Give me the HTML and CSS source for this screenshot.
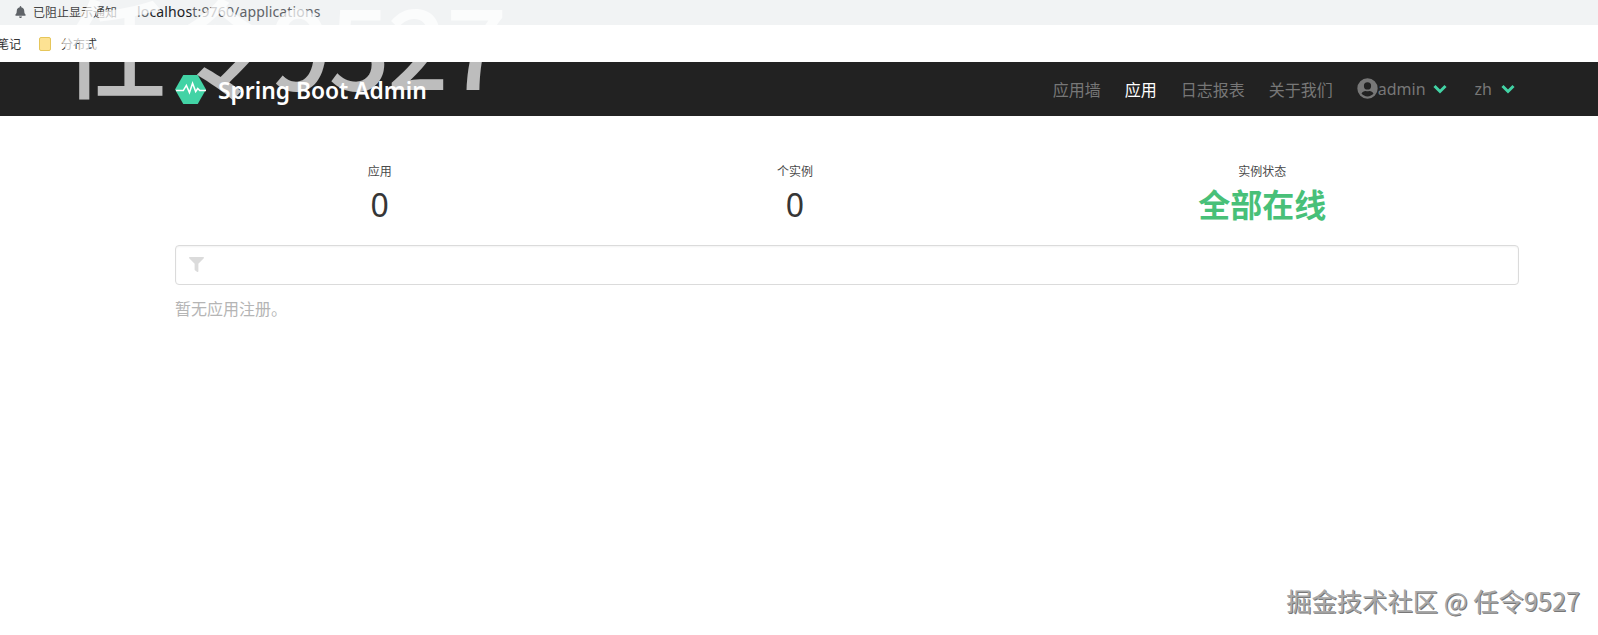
FILE: index.html
```html
<!DOCTYPE html>
<html lang="zh">
<head>
<meta charset="utf-8">
<title>Spring Boot Admin</title>
<link rel="stylesheet" href="styles.css">
</head>
<body>
<div class="addressbar">
  <svg class="bell" viewBox="0 0 448 512"><path d="M224 512c35 0 64-29 64-64H160c0 35 29 64 64 64zm215-150c-19-21-55-52-55-154 0-78-54-140-128-155V32a32 32 0 0 0-64 0v21C118 68 64 130 64 208c0 102-36 133-55 154-6 6-9 14-9 22 0 16 13 32 32 32h384c19 0 32-16 32-32 0-8-3-16-9-22z"/></svg>
  <span class="blocked">已阻止显示通知</span>
  <span class="url"><span class="url-dim">lo</span>calhos<span class="url-dim">t:9760/applications</span></span>
</div>
<div class="bookmarks">
  <span class="bm-note">笔记</span>
  <span class="folder"></span>
  <span class="bm-name">分布式</span>
</div>
<div class="watermark">任令9527</div>
<nav class="navbar">
  <div class="brand">
    <svg class="logo" viewBox="0 0 30 30"><path class="logo-hex" d="M8 1h14l8 14-8 14H8L0 15z"/><path class="logo-pulse" d="M1 16h7l3-5 3 7 3-9 3 8 2-3 2 2h6"/></svg>
    <span class="brand-name">Spring Boot Admin</span>
  </div>
  <div class="menu">
    <a class="item">应用墙</a>
    <a class="item active">应用</a>
    <a class="item">日志报表</a>
    <a class="item">关于我们</a>
    <a class="item user">
      <svg class="avatar" viewBox="0 0 512 512"><path d="M256 8a248 248 0 1 0 0 496 248 248 0 0 0 0-496zm0 96a88 88 0 1 1 0 176 88 88 0 0 1 0-176zm0 344c-59 0-111-27-146-69 19-36 56-61 99-61 2 0 5 0 7 1 13 4 27 7 40 7s27-3 40-7c2-1 5-1 7-1 43 0 80 25 99 61-35 42-87 69-146 69z"/></svg><span>admin</span>
      <svg class="chev" viewBox="0 0 14 10"><path d="M1.500 2 7 7.500 12.500 2"/></svg>
    </a>
    <a class="item lang">
      <span>zh</span>
      <svg class="chev" viewBox="0 0 14 10"><path d="M1.500 2 7 7.500 12.500 2"/></svg>
    </a>
  </div>
</nav>
<main class="content">
  <div class="stats">
    <div class="stat"><p class="stat-label">应用</p><p class="stat-value">0</p></div>
    <div class="stat"><p class="stat-label">个实例</p><p class="stat-value">0</p></div>
    <div class="stat"><p class="stat-label">实例状态</p><p class="stat-value ok">全部在线</p></div>
  </div>
  <div class="filter">
    <svg class="funnel" viewBox="0 0 512 512"><path d="M487 0H25C3 0-9 27 7 43l185 184v205c0 8 4 15 10 20l80 56c16 11 38 0 38-20V227L505 43c16-16 4-43-18-43z"/></svg>
  </div>
  <p class="empty">暂无应用注册。</p>
</main>
<div class="credit">掘金技术社区 @ 任令9527</div>
</body>
</html>
```
FILE: styles.css
```css
* { box-sizing: border-box; }
html, body { margin: 0; padding: 0; background: #fff; }
body {
  position: relative;
  height: 635px;
  overflow: hidden;
  font-family: "Noto Sans", "Noto Sans CJK SC", sans-serif;
  color: #363636;
}
p { margin: 0; }

.addressbar {
  display: flex;
  align-items: center;
  height: 25px;
  padding: 0 0 2px 15px;
  background: #f1f3f4;
  font-size: 12px;
  color: #444;
}
.bell { width: 11px; height: 12px; fill: #5f6368; }
.blocked { margin-left: 7px; width: 84px; white-space: nowrap; }
.url { margin-left: 20px; font-size: 14px; letter-spacing: 0.150px; color: #202124; white-space: nowrap; }
.url-dim { color: #5f6368; }

.bookmarks {
  display: flex;
  align-items: center;
  height: 37px;
  background: #fff;
  font-size: 12px;
  color: #333;
}
.bm-note { margin-left: -3px; }
.folder {
  width: 12px;
  height: 14px;
  margin-left: 18px;
  background: #fde293;
  border: 1px solid #e6c65a;
  border-radius: 2px;
}
.bm-name { margin-left: 10px; }

.watermark {
  position: absolute;
  z-index: 1;
  left: 60px;
  top: -21px;
  font-family: "Noto Sans CJK SC", "Noto Sans", sans-serif;
  font-size: 108px;
  font-weight: 500;
  line-height: 1.2;
  letter-spacing: -3px;
  color: rgba(255, 255, 255, 0.7);
  white-space: nowrap;
}

.navbar {
  display: flex;
  align-items: center;
  justify-content: space-between;
  height: 54px;
  padding: 0 83px 0 175px;
  background: #222;
}
.brand, .menu { position: relative; z-index: 2; display: flex; align-items: center; }
.logo { width: 31px; height: 31px; }
.logo-hex { fill: #42d3a5; }
.logo-pulse { fill: none; stroke: #fff; stroke-width: 1.500; }
.brand-name {
  margin-left: 12px;
  padding-top: 2px;
  font-size: 22.800px;
  font-weight: 600;
  color: #fff;
  white-space: nowrap;
}
.menu { gap: 24px; padding-bottom: 1px; font-size: 16px; color: #777; }
.item { display: flex; align-items: center; white-space: nowrap; }
.item.active { color: #fff; }
.avatar { width: 21px; height: 21px; fill: #777; }
.chev { width: 14px; height: 10px; margin-left: 7px; }
.chev path { fill: none; stroke: #42d3a5; stroke-width: 3; }
.lang { margin-left: 4px; }
.lang .chev { margin-left: 9px; }

.content { padding: 47px 79px 0 175px; }
.stats { display: flex; }
.stat { flex: 1 1 auto; text-align: center; }
.stat-label { font-size: 12px; line-height: 18px; color: #4a4a4a; }
.stat-value { margin-top: 4px; font-size: 32px; line-height: 40px; }
.stat-value.ok { font-weight: 700; color: #48c078; }
.filter {
  display: flex;
  align-items: center;
  height: 40px;
  margin-top: 20px;
  padding: 0 0 1px 13px;
  border: 1px solid #dbdbdb;
  border-radius: 4px;
  box-shadow: inset 0 1px 2px rgba(10, 10, 10, 0.05);
}
.funnel { width: 15px; height: 15px; fill: #dbdbdb; }
.empty { margin-top: 12px; font-size: 16px; line-height: 24px; color: #b5b5b5; }

.credit {
  position: absolute;
  right: 18px;
  bottom: 21px;
  font-family: "Noto Sans CJK SC", "Noto Sans", sans-serif;
  font-size: 25.300px;
  font-weight: 400;
  line-height: 28px;
  color: #a8a8a8;
  text-shadow: 1px 1px 0 #777, -1px -1px 0 #fff;
  white-space: nowrap;
}
```
